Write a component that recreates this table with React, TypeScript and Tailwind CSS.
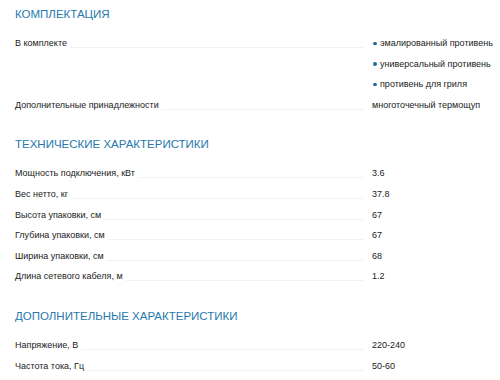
import React from 'react';

type Row = { label: string; values: string[]; bullets?: boolean };

const SECTIONS: { title: string; rows: Row[] }[] = [
  {
    title: 'КОМПЛЕКТАЦИЯ',
    rows: [
      {
        label: 'В комплекте',
        values: ['эмалированный противень', 'универсальный противень', 'противень для гриля'],
        bullets: true,
      },
      { label: 'Дополнительные принадлежности', values: ['многоточечный термощуп'] },
    ],
  },
  {
    title: 'ТЕХНИЧЕСКИЕ ХАРАКТЕРИСТИКИ',
    rows: [
      { label: 'Мощность подключения, кВт', values: ['3.6'] },
      { label: 'Вес нетто, кг', values: ['37.8'] },
      { label: 'Высота упаковки, см', values: ['67'] },
      { label: 'Глубина упаковки, см', values: ['67'] },
      { label: 'Ширина упаковки, см', values: ['68'] },
      { label: 'Длина сетевого кабеля, м', values: ['1.2'] },
    ],
  },
  {
    title: 'ДОПОЛНИТЕЛЬНЫЕ ХАРАКТЕРИСТИКИ',
    rows: [
      { label: 'Напряжение, В', values: ['220-240'] },
      { label: 'Частота тока, Гц', values: ['50-60'] },
    ],
  },
];

function SpecRow({ row }: { row: Row }) {
  return (
    <div className="flex">
      <div className="flex flex-1 items-start h-[20.6px]">
        <span className="leading-[20.6px] text-[#222] whitespace-nowrap">{row.label}</span>
        <div className="flex-1 mt-[14px] ml-[3px] border-b border-[#f2f2f2]" />
      </div>
      <div className="w-[113px] shrink-0 ml-[8px]">
        {row.values.map((v) => (
          <div key={v} className="leading-[20.6px] text-[#222] whitespace-nowrap flex items-center">
            {row.bullets && <span className="shrink-0 inline-block w-[3.5px] h-[3.5px] rounded-full bg-[#1f6d9e] mr-[3.5px] ml-[1px]" />}
            {v}
          </div>
        ))}
      </div>
    </div>
  );
}

export default function App() {
  return (
    <div className="w-[500px] h-[380px] overflow-hidden bg-white px-[15px] pt-[7px] text-[9px] font-['Liberation_Sans',Arial,sans-serif]">
      {SECTIONS.map((section) => (
        <section key={section.title} className="mb-[22px]">
          <h2 className="text-[11.5px] leading-[14px] text-[#2779ad] mb-[12px]">{section.title}</h2>
          <div className="flex flex-col">
            {section.rows.map((row) => (
              <SpecRow key={row.label} row={row} />
            ))}
          </div>
        </section>
      ))}
    </div>
  );
}
